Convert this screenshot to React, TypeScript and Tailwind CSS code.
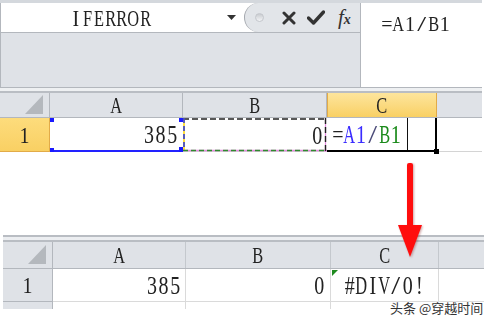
import React from "react";

const WIDE = "ABCDEFGHJKLMNOPQRSTUVWXYZ";

function charClass(c: string) {
  if (WIDE.includes(c)) return "inline-block scale-x-[0.82]";
  if (c === "/") return "inline-block scale-x-[1.6]";
  return "inline-block";
}

function T({
  s,
  colors,
  sy = "scale-y-[1.2]",
  className = "",
}: {
  s: string;
  colors?: string[];
  sy?: string;
  className?: string;
}) {
  return (
    <span
      className={`inline-flex ${sy} leading-none font-['Liberation_Serif','DejaVu_Serif',serif] text-[20px] ${className}`}
    >
      {s.split("").map((c, i) => (
        <span
          key={i}
          className="inline-flex justify-center w-[11.6px]"
          style={colors ? { color: colors[i] } : undefined}
        >
          <span className={charClass(c)}>{c}</span>
        </span>
      ))}
    </span>
  );
}

export default function App() {
  return (
    <div className="w-[488px] h-[323px] bg-white relative overflow-hidden text-[#222]">
      {/* top screenshot */}
      <div className="w-[482px] flex flex-col">
        <div className="h-[3px] bg-[#d4d8dd]" />
        <div className="flex h-[84px]">
          <div className="w-[360px] flex flex-col border-l border-[#b3b7bd] bg-[#dfe2e7]">
            <div className="h-[30px] flex bg-white border-b border-[#b3b7bd]">
              <div className="w-[243px] flex items-center">
                <div className="w-[219px] flex justify-center pt-[1px]">
                  <T s="IFERROR" sy="scale-y-[1.15]" />
                </div>
                <svg width="9" height="6" viewBox="0 0 9 6" className="ml-[7px]">
                  <polygon points="0,0 9,0 4.5,5" fill="#333" />
                </svg>
              </div>
              <div className="flex-1 flex items-center rounded-l-[15px] border-l border-[#a5a9af] bg-[#e2e5e9]">
                <div className="ml-[10px] w-[9px] h-[9px] rounded-full bg-gradient-to-b from-[#c9ccd0] to-[#f3f4f6] border border-[#c4c7cc]" />
                <svg className="ml-[18px]" width="14" height="14" viewBox="0 0 14 14">
                  <path d="M2 2 L12 12 M12 2 L2 12" stroke="#333" strokeWidth="3" strokeLinecap="round" />
                </svg>
                <svg className="ml-[11px]" width="18" height="15" viewBox="0 0 18 15">
                  <path d="M1.5 8 L6.5 13 L16.5 2" stroke="#333" strokeWidth="3.4" fill="none" strokeLinecap="round" strokeLinejoin="round" />
                </svg>
                <span className="ml-[13px] italic font-['Liberation_Serif',serif] text-[21px] leading-none text-[#333]">
                  f<span className="text-[14px] font-bold">x</span>
                </span>
              </div>
            </div>
            <div className="flex-1" />
          </div>
          <div className="w-px bg-[#b3b7bd]" />
          <div className="flex-1 bg-white pl-[20px] pt-[9px]">
            <T s="=A1/B1" sy="scale-y-[1.1]" />
          </div>
        </div>
        <div className="h-px bg-[#b3b7bd]" />
        <div className="h-[3px] bg-[#eef0f2]" />
        <div className="h-[2px] bg-[#b9bdc3]" />
        {/* header */}
        <div className="flex h-[25px] bg-[#dfe2e7] border-b border-[#b3b7bd]">
          <div className="w-[50px] relative border-r border-[#b3b7bd]">
            <svg className="absolute left-[25px] top-[2px]" width="19" height="20" viewBox="0 0 19 20">
              <polygon points="18,0 18,19 0,19" fill="#b4b8bd" />
            </svg>
          </div>
          <div className="w-[133px] border-r border-[#b3b7bd] flex items-center justify-center"><T s="A" /></div>
          <div className="w-[144px] border-r border-[#b3b7bd] flex items-center justify-center"><T s="B" /></div>
          <div className="w-[110px] border-x border-[#e2ab48] bg-gradient-to-b from-[#fde59c] to-[#f9d063] flex items-center justify-center"><T s="C" /></div>
          <div className="flex-1" />
        </div>
        {/* row 1 */}
        <div className="flex h-[34px]">
          <div className="w-[50px] bg-gradient-to-b from-[#fddc7c] to-[#f9d063] border-r border-b border-[#e2ab48] flex items-center justify-center"><T s="1" /></div>
          <div className="w-[133px] relative bg-white flex items-center justify-end pr-[5px] border-b-2 border-[#2222ff]">
            <T s="385" sy="scale-y-[1.28]" />
            <div className="absolute left-0 top-0 w-[4px] h-[4px] bg-[#1a1aff]" />
            <div className="absolute left-0 bottom-[-2px] w-[4px] h-[4px] bg-[#1a1aff]" />
            <div className="absolute right-[-1px] top-0 w-[5px] h-[4px] bg-[#1a1aff]" />
            <div className="absolute right-[-1px] bottom-[-2px] w-[5px] h-[5px] bg-[#1a1aff]" />
          </div>
          <div className="w-[144px] relative bg-white flex items-center justify-end pr-[4px] border-b border-[#d4d4d4]">
            <T s="0" sy="scale-y-[1.28]" />
            <svg className="absolute left-0 top-0" width="144" height="34" viewBox="0 0 144 34">
              <line x1="0" y1="1" x2="144" y2="1" stroke="#222" strokeWidth="1.5" strokeDasharray="6 3" />
              <line x1="1" y1="0" x2="1" y2="33" stroke="#ffd400" strokeWidth="1.5" />
              <line x1="1" y1="0" x2="1" y2="33" stroke="#2233dd" strokeWidth="1.5" strokeDasharray="5 3" />
              <line x1="0" y1="32.5" x2="144" y2="32.5" stroke="#e58be0" strokeWidth="1.5" />
              <line x1="0" y1="32.5" x2="144" y2="32.5" stroke="#2f8a2f" strokeWidth="1.5" strokeDasharray="5 3" />
              <line x1="142.5" y1="0" x2="142.5" y2="34" stroke="#e58be0" strokeWidth="1.2" />
              <line x1="142.5" y1="0" x2="142.5" y2="34" stroke="#222" strokeWidth="1.4" strokeDasharray="6 3" />
            </svg>
          </div>
          <div className="w-[110px] relative bg-white flex items-center pl-[5px] border-r-2 border-b-2 border-black">
            <T
              s="=A1/B1"
              sy="scale-y-[1.28]"
              colors={["#222", "#3a2cff", "#3a2cff", "#4b4b78", "#1a8a1a", "#1a8a1a"]}
            />
            <div className="absolute left-[80px] top-0 bottom-0 w-px bg-[#111]" />
            <div className="absolute right-[-4px] bottom-[-4px] w-[5px] h-[5px] bg-black" />
          </div>
          <div className="flex-1 border-b border-[#d4d4d4]" />
        </div>
      </div>

      {/* bottom screenshot */}
      <div className="mt-[83px] ml-[3px] w-[481px] flex flex-col">
        <div className="h-[2px] bg-[#b9bdc3]" />
        <div className="h-[3px] bg-[#eceef1]" />
        <div className="h-[2px] bg-[#b9bdc3]" />
        <div className="flex h-[27px] bg-[#dfe2e7] border-b border-[#b3b7bd]">
          <div className="w-[50px] relative border-r border-[#b3b7bd]">
            <svg className="absolute left-[25px] top-[3px]" width="19" height="20" viewBox="0 0 19 20">
              <polygon points="18,0 18,19 0,19" fill="#b4b8bd" />
            </svg>
          </div>
          <div className="w-[133px] border-r border-[#c4c8cd] flex items-center justify-center"><T s="A" /></div>
          <div className="w-[145px] border-r border-[#c4c8cd] flex items-center justify-center"><T s="B" /></div>
          <div className="w-[108px] border-r border-[#c4c8cd] flex items-center justify-center"><T s="C" /></div>
          <div className="flex-1" />
        </div>
        <div className="flex h-[33px]">
          <div className="w-[50px] bg-[#dfe2e7] border-r border-b border-[#b3b7bd] flex items-center justify-center"><T s="1" /></div>
          <div className="w-[133px] border-r border-b border-[#dadada] flex items-center justify-end pr-[4px]"><T s="385" sy="scale-y-[1.28]" /></div>
          <div className="w-[145px] border-r border-b border-[#dadada] flex items-center justify-end pr-[5px]"><T s="0" sy="scale-y-[1.28]" /></div>
          <div className="w-[108px] relative border-r border-b border-[#dadada] flex items-center justify-center">
            <T s="#DIV/0!" sy="scale-y-[1.28]" />
            <svg className="absolute left-[1px] top-[1px]" width="6" height="6" viewBox="0 0 6 6">
              <polygon points="0,0 6,0 0,6" fill="#1f8a1f" />
            </svg>
          </div>
          <div className="flex-1 border-b border-[#dadada]" />
        </div>
        <div className="flex h-[7px]">
          <div className="w-[50px] bg-[#dfe2e7] border-r border-[#b3b7bd]" />
          <div className="w-[133px] border-r border-[#dadada]" />
          <div className="w-[145px] border-r border-[#dadada]" />
        </div>
      </div>

      {/* red arrow */}
      <svg className="absolute left-[394px] top-[160px]" width="32" height="100" viewBox="0 0 32 100">
        <defs>
          <filter id="sh" x="-50%" y="-20%" width="200%" height="140%">
            <feGaussianBlur stdDeviation="0.8" />
          </filter>
        </defs>
        <g filter="url(#sh)" opacity="0.35">
          <rect x="14" y="4" width="6" height="64" fill="#700" />
          <polygon points="5,66 29,66 17,98" fill="#700" />
        </g>
        <rect x="13" y="3" width="6" height="64" rx="2" fill="#ff0d0d" />
        <polygon points="4,65 28,65 16,97" fill="#ff0d0d" />
      </svg>

      {/* watermark */}
      <div className="absolute left-[390px] top-[301px] text-[13px] leading-none text-[#333] font-['Noto_Sans_CJK_SC',sans-serif] [text-shadow:0_0_2px_#fff,0_0_2px_#fff]">
        头条 @穿越时间
      </div>
    </div>
  );
}
